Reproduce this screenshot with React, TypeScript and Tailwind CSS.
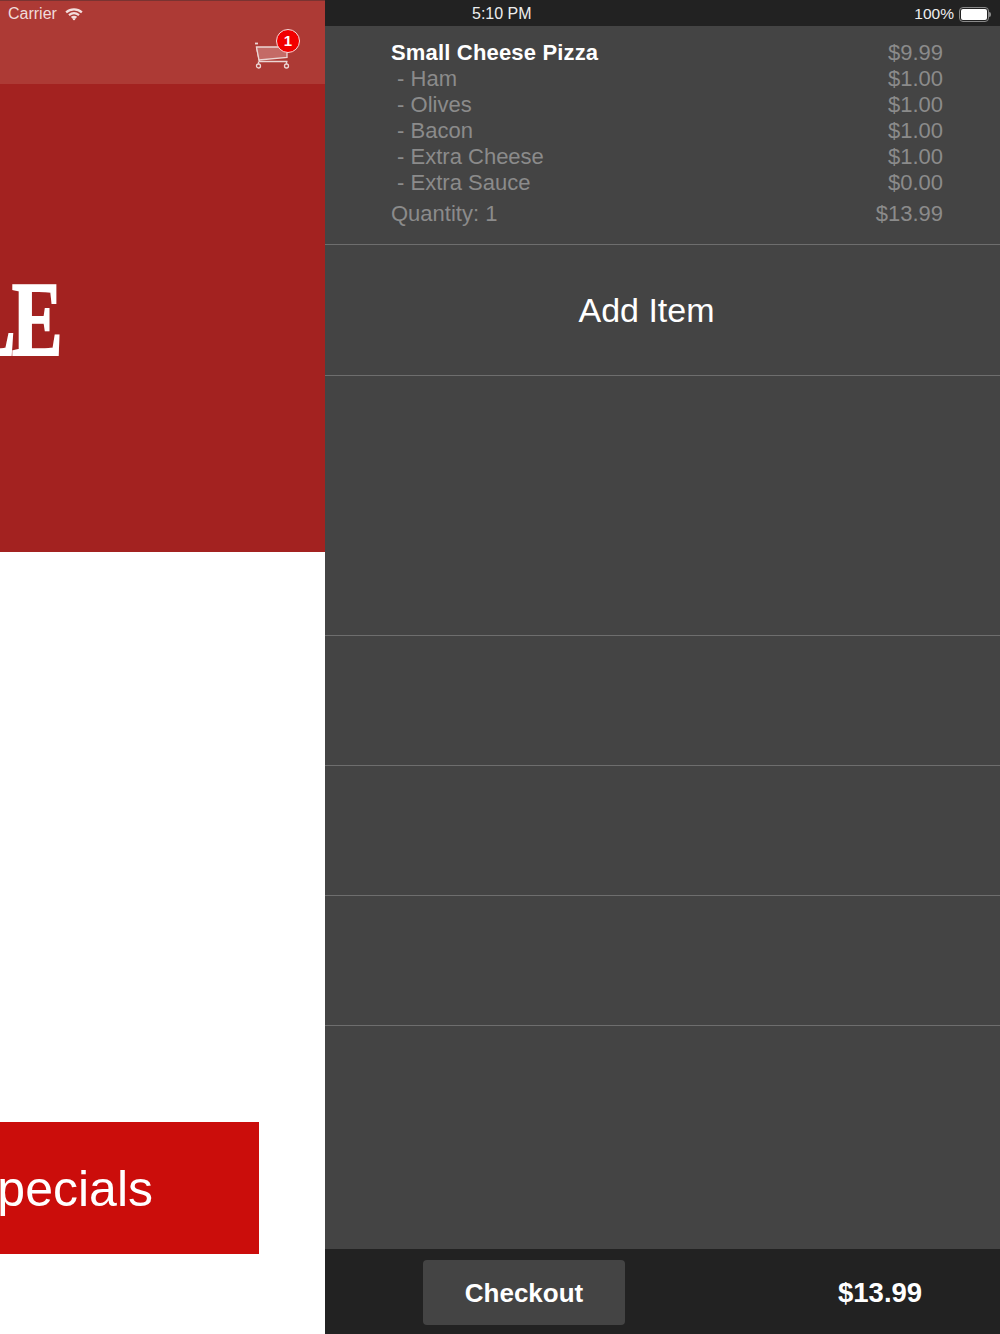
const sideItems = [
  { name: " - Ham", price: "$1.00" },
  { name: " - Olives", price: "$1.00" },
  { name: " - Bacon", price: "$1.00" },
  { name: " - Extra Cheese", price: "$1.00" },
  { name: " - Extra Sauce", price: "$0.00" },
];

function Wifi() {
  return (
    <svg width="18" height="14" viewBox="0 0 19 14" fill="none" stroke="#f3dedd" strokeWidth="2.4">
      <path d="M1.2 5.2C6 1 13 1 17.8 5.2" />
      <path d="M4.2 8.2C7.4 5.6 11.6 5.6 14.8 8.2" />
      <path d="M7 11C8.5 9.9 10.5 9.9 12 11" />
      <circle cx="9.5" cy="12.4" r="1.3" fill="#f3dedd" stroke="none" />
    </svg>
  );
}

function Cart() {
  return (
    <svg width="38" height="30" viewBox="0 0 38 30" fill="none" stroke="#ecd6d4" strokeWidth="1.3">
      <path d="M1 3.5H4" strokeWidth="1.8" />
      <path d="M2.5 7L5.5 21.5H33.5" strokeWidth="1.4" />
      <path d="M2.5 7H33V17.5L5 20Z" fill="#c46a66" />
      <circle cx="4.5" cy="26" r="2" />
      <circle cx="32.5" cy="26" r="2" />
      <path d="M4.5 24V21.5M32.5 24V21.5" />
    </svg>
  );
}

function EmptyRow({ className }: { className: string }) {
  return <div className={`border-b border-[#6e6e6e] ${className}`} />;
}

export default function App() {
  return (
    <div className="flex h-[1334px] w-[1000px] overflow-hidden bg-white font-['Liberation_Sans',Arial,sans-serif]">
      <div className="flex w-[325px] shrink-0 flex-col bg-white">
        <header className="flex h-[84px] shrink-0 flex-col border-t border-[#7a3331] bg-[#ad3a35]">
          <div className="flex items-center gap-[8px] pl-2 pt-[3px] text-[16px] leading-5 text-[#f0dcdb]">
            <span>Carrier</span>
            <Wifi />
          </div>
          <div className="relative ml-[254px] mt-[16px] h-[30px] w-[38px]">
            <Cart />
            <span className="absolute left-[22px] top-[-11px] flex h-[24px] w-[24px] items-center justify-center rounded-full border-[1.5px] border-[#f4dede] bg-[#f20000] text-[15px] font-bold text-white">
              1
            </span>
          </div>
        </header>

        <div className="flex h-[468px] shrink-0 items-center justify-end overflow-hidden bg-[#a32220] pr-[266px]">
          <span className="mt-[4px] inline-block origin-right scale-x-[0.72] whitespace-nowrap font-['Liberation_Serif',serif] text-[106px] font-bold leading-none tracking-tighter text-white [-webkit-text-stroke:2px_white]">
            LE
          </span>
        </div>

        <div className="flex-1 pt-[570px]">
          <div className="flex h-[132px] w-[259px] items-center justify-end overflow-hidden bg-[#cb0d0b] pr-[106px]">
            <span className="mt-[2px] whitespace-nowrap text-[50px] leading-none text-white">Specials</span>
          </div>
        </div>
      </div>

      <div className="flex min-w-0 flex-1 flex-col bg-[#444444]">
        <div className="flex h-[26px] shrink-0 items-center justify-between bg-[#222222] pl-[147px] pr-[9px] pt-[2px] text-[16px] text-[#eeeeee]">
          <span>5:10 PM</span>
          <div className="flex items-center gap-[5px]">
            <span className="text-[15.5px]">100%</span>
            <div className="flex items-center">
              <div className="h-[15px] w-[30px] rounded-[4px] border border-[#8a8a8a] p-[1px]">
                <div className="h-full w-full rounded-[2px] bg-white" />
              </div>
              <div className="h-[5px] w-[2px] rounded-r-sm bg-[#8a8a8a]" />
            </div>
          </div>
        </div>

        <div className="h-[219px] shrink-0 border-b border-[#6e6e6e] pl-[66px] pr-[57px] pt-[14px] text-[22px] leading-[26px]">
          <div className="flex justify-between">
            <span className="font-bold tracking-[0.17px] text-white">Small Cheese Pizza</span>
            <span className="text-[#8b8b8b]">$9.99</span>
          </div>
          {sideItems.map((item) => (
            <div key={item.name} className="flex justify-between text-[#8b8b8b]">
              <span className="whitespace-pre">{item.name}</span>
              <span>{item.price}</span>
            </div>
          ))}
          <div className="mt-[5px] flex justify-between text-[#8b8b8b]">
            <span>Quantity: 1</span>
            <span>$13.99</span>
          </div>
        </div>

        <div className="flex h-[131px] shrink-0 items-center justify-center border-b border-[#6e6e6e] pr-[32px] pt-[1px] text-[34px] text-white">
          Add Item
        </div>

        <EmptyRow className="h-[260px] shrink-0" />
        <EmptyRow className="h-[130px] shrink-0" />
        <EmptyRow className="h-[130px] shrink-0" />
        <EmptyRow className="h-[130px] shrink-0" />
        <div className="flex-1" />

        <div className="flex h-[85px] shrink-0 items-center bg-[#222222] pl-[98px] pt-[2px]">
          <button
            type="button"
            className="h-[65px] w-[202px] rounded-[4px] bg-[#444444] pt-px text-[26px] font-bold text-white"
          >
            Checkout
          </button>
          <span className="ml-[213px] mt-px text-[27.5px] font-bold text-white">$13.99</span>
        </div>
      </div>
    </div>
  );
}
